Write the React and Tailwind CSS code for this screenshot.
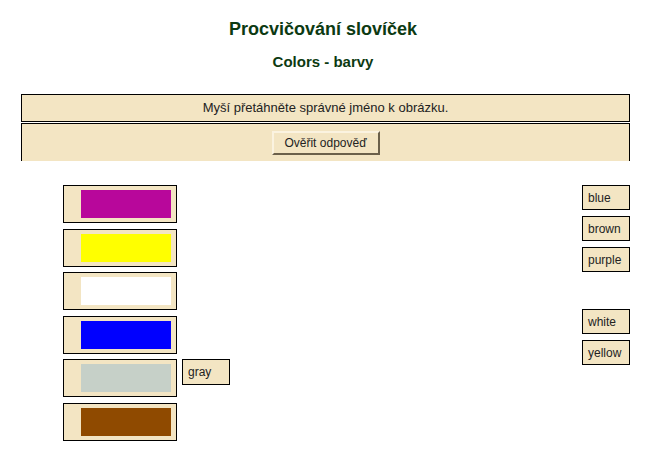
import React from 'react';

const swatches = [
  { color: 'bg-[#b8079b]' },
  { color: 'bg-[#ffff00]' },
  { color: 'bg-[#ffffff]' },
  { color: 'bg-[#0000ff]' },
  { color: 'bg-[#c6d0c8]', placed: 'gray' },
  { color: 'bg-[#8f4a00]' },
];

const words = ['blue', 'brown', 'purple', null, 'white', 'yellow'];

const Word = ({ text, tall }) => (
  <div
    className={`w-[48px] ${tall ? 'h-[26px]' : 'h-[25px]'} border border-black bg-[#f3e5c3] pl-[5px] flex items-center text-[12px] text-[#222]`}
  >
    {text}
  </div>
);

const App = () => {
  return (
    <div className="w-[646px] h-[461px] bg-white font-['Liberation_Sans',Arial,sans-serif] text-black overflow-hidden">
      <div className="pt-[18px] text-center">
        <h1 className="text-[18px] leading-[22px] font-bold text-[#0c3a12]">Procvičování slovíček</h1>
        <h2 className="mt-[13px] text-[15px] leading-[18px] font-bold text-[#0c3a12]">Colors - barvy</h2>
      </div>

      <div className="mx-[21px] mt-[23px] w-[609px]">
        <div className="h-[28px] border border-black bg-[#f3e5c3] flex items-center justify-center text-[13px] text-[#222]">
          Myší přetáhněte správné jméno k obrázku.
        </div>
        <div className="mt-[1px] h-[38px] border-x border-t border-black bg-[#f3e5c3] flex justify-center pt-[7px]">
          <button className="w-[108px] h-[24px] bg-[#f3e5c3] border-2 border-t-[#fbf3e0] border-l-[#fbf3e0] border-b-[#6b604a] border-r-[#6b604a] text-[12px] text-[#222] leading-none">
            Ověřit odpověď
          </button>
        </div>
      </div>

      <div className="mt-[24px] flex justify-between pl-[63px] pr-[16px]">
        <div className="flex flex-col gap-[5.6px]">
          {swatches.map((s, i) => (
            <div key={i} className="flex items-start gap-[5px]">
              <div className="w-[114px] h-[38px] border border-black bg-[#f3e5c3] pl-[17px] pt-[4px]">
                <div className={`w-[90px] h-[28px] ${s.color}`} />
              </div>
              {s.placed && <Word text={s.placed} tall />}
            </div>
          ))}
        </div>
        <div className="flex flex-col gap-[6px]">
          {words.map((w, i) =>
            w ? <Word key={i} text={w} /> : <div key={i} className="h-[25px]" />
          )}
        </div>
      </div>
    </div>
  );
};

export default App;
